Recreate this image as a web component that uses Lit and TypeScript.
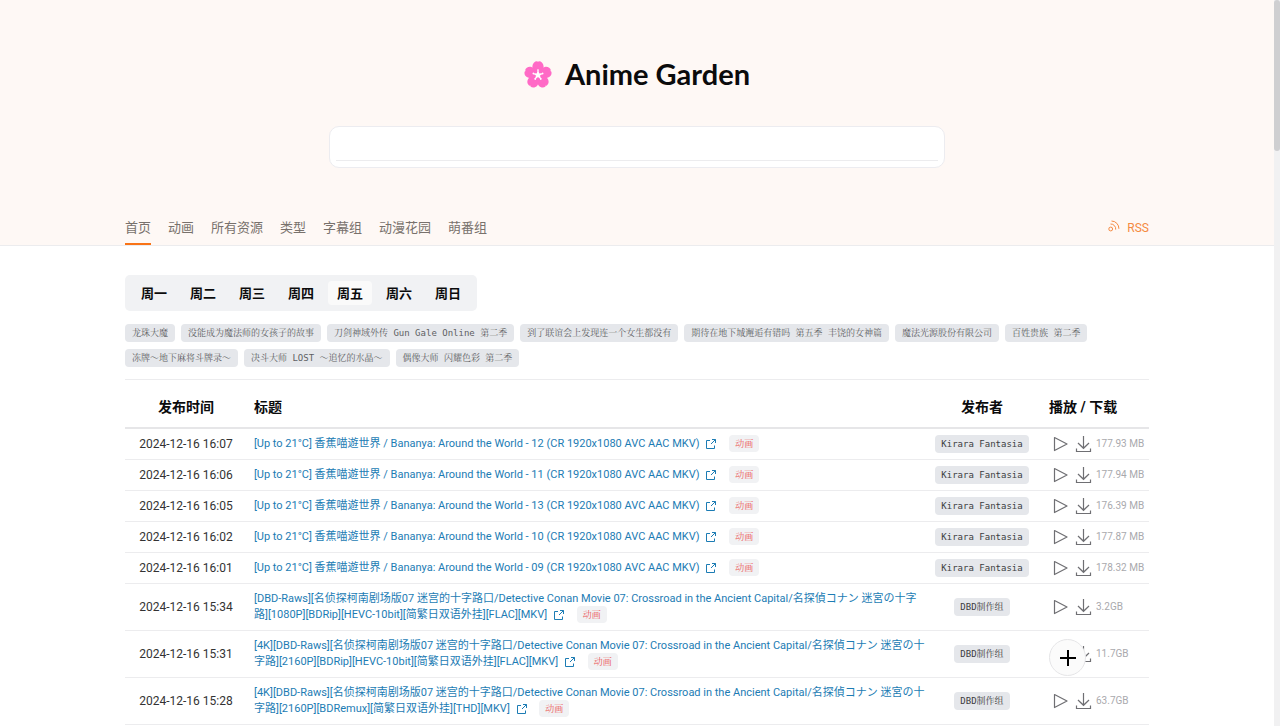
import { LitElement, html, css, svg } from "lit";
import { customElement, state } from "lit/decorators.js";
import { classMap } from "lit/directives/class-map.js";

interface Resource {
  time: string;
  title: string;
  team: string;
  size: string;
}

const NAV = ["首页", "动画", "所有资源", "类型", "字幕组", "动漫花园", "萌番组"];
const DAYS = ["周一", "周二", "周三", "周四", "周五", "周六", "周日"];
const SHOWS = [
  "龙珠大魔",
  "没能成为魔法师的女孩子的故事",
  "刀剑神域外传 Gun Gale Online 第二季",
  "到了联谊会上发现连一个女生都没有",
  "期待在地下城邂逅有错吗 第五季 丰饶的女神篇",
  "魔法光源股份有限公司",
  "百姓贵族 第二季",
  "冻牌～地下麻将斗牌录～",
  "决斗大师 LOST ～追忆的水晶～",
  "偶像大师 闪耀色彩 第二季",
];

const bananya = (ep: string) =>
  `[Up to 21°C] 香蕉喵遊世界 / Bananya: Around the World - ${ep} (CR 1920x1080 AVC AAC MKV)`;
const CONAN =
  "[DBD-Raws][名侦探柯南剧场版07 迷宫的十字路口/Detective Conan Movie 07: Crossroad in the Ancient Capital/名探偵コナン 迷宮の十字路]";

const RESOURCES: Resource[] = [
  { time: "2024-12-16 16:07", title: bananya("12"), team: "Kirara Fantasia", size: "177.93 MB" },
  { time: "2024-12-16 16:06", title: bananya("11"), team: "Kirara Fantasia", size: "177.94 MB" },
  { time: "2024-12-16 16:05", title: bananya("13"), team: "Kirara Fantasia", size: "176.39 MB" },
  { time: "2024-12-16 16:02", title: bananya("10"), team: "Kirara Fantasia", size: "177.87 MB" },
  { time: "2024-12-16 16:01", title: bananya("09"), team: "Kirara Fantasia", size: "178.32 MB" },
  { time: "2024-12-16 15:34", title: `${CONAN}[1080P][BDRip][HEVC-10bit][简繁日双语外挂][FLAC][MKV]`, team: "DBD制作组", size: "3.2GB" },
  { time: "2024-12-16 15:31", title: `[4K]${CONAN}[2160P][BDRip][HEVC-10bit][简繁日双语外挂][FLAC][MKV]`, team: "DBD制作组", size: "11.7GB" },
  { time: "2024-12-16 15:28", title: `[4K]${CONAN}[2160P][BDRemux][简繁日双语外挂][THD][MKV]`, team: "DBD制作组", size: "63.7GB" },
];

const petal = (deg: number) => svg`<path transform="rotate(${deg} 14 15)"
  d="M14 15.5C10.5 13.5 8.2 9.6 8.4 6.2C8.6 3.2 10.8 1.1 13.3 1.3L14 2L14.7 1.3C17.2 1.1 19.4 3.2 19.6 6.2C19.8 9.6 17.5 13.5 14 15.5Z"/>`;
const stamen = (deg: number) => svg`<path transform="rotate(${deg} 14 15)"
  d="M14 9.3A.8.8 0 0 1 14.5 10.8L15.5 15H12.5L13.5 10.8A.8.8 0 0 1 14 9.3Z"/>`;

@customElement("app-root")
export class AppRoot extends LitElement {
  @state() private day = "周五";

  static styles = css`
    :host {
      display: flex;
      height: 100vh;
      overflow: hidden;
      background: #fff;
      color: #0b0b0c;
      font-family: Roboto, "Noto Sans CJK SC", sans-serif;
    }
    * { box-sizing: border-box; }
    a { color: inherit; text-decoration: none; }
    button { font: inherit; color: inherit; border: 0; background: none; padding: 0; cursor: pointer; }
    svg { display: block; }
    .page { flex: 1; min-width: 0; overflow: hidden; }
    .track { width: 6px; background: #f1f1f2; }
    .thumb { width: 6px; height: 151px; border-radius: 3px; background: #cfcfd1; }
    .wrap { width: 100%; max-width: 1024px; margin: 0 auto; }
    .hero { background: #fef8f5; border-bottom: 1px solid #ececee; padding-top: 54px; }
    .brand {
      display: flex; align-items: center; justify-content: center; gap: 13px;
      height: 40px; margin: 0;
      font: 700 29px/40px Lato, sans-serif;
    }
    .search {
      width: 100%; max-width: 616px; height: 42px; margin: 32px auto 50px;
      padding: 0 6px 6px; background: #fff;
      border: 1px solid #ececf0; border-radius: 10px;
    }
    .search input {
      display: block; width: 100%; height: 100%; padding: 0 8px;
      border: 0; border-bottom: 1px solid #ececee; outline: 0;
      background: none; font: inherit; font-size: 14px;
    }
    .nav { display: flex; gap: 17px; font-size: 13px; line-height: 20px; color: #78716c; }
    .tab { padding-bottom: 5px; border-bottom: 2px solid transparent; }
    .tab.current { border-color: #f97316; }
    .rss { display: flex; gap: 7px; margin-left: auto; font-size: 12px; color: #f58a42; }
    .rss svg { margin-top: 2px; }
    .days {
      display: inline-flex; gap: 5px; margin-top: 29px; padding: 6px 7px;
      background: #f1f2f4; border-radius: 5px; vertical-align: top;
    }
    .day { width: 44px; height: 24px; padding-bottom: 2px; border-radius: 4px; font-size: 13px; font-weight: 700; }
    .day.current { background: #fafafa; }
    .shows {
      display: flex; flex-wrap: wrap; gap: 7px 6px;
      margin: 13px 0 12px; padding: 0; list-style: none;
    }
    .show, .team, .kind {
      font: 9px/18px "DejaVu Sans Mono", "Noto Serif CJK SC", serif;
      background: #e5e7eb; border-radius: 4px;
    }
    .show { display: block; height: 18px; padding: 0 7px; color: #5e5f63; }
    .list {
      width: 100%; table-layout: fixed; border-spacing: 0;
      border-top: 1px solid #ececee;
    }
    .c-time { width: 122px; }
    .c-team { width: 112px; }
    .c-act { width: 111px; }
    th {
      height: 49px; padding: 4px 0 0 7px; border-bottom: 2px solid #e6e6e8;
      text-align: left; font-size: 14px; font-weight: 700;
    }
    td { padding: 7px 0; border-bottom: 1px solid #ececee; font-size: 11px; line-height: 16px; }
    th.mid, td.mid { padding-left: 0; padding-right: 0; text-align: center; }
    .time { font-size: 12px; color: #333; }
    td.title { padding: 7px 0 7px 7px; color: #1c7cb4; }
    .ext { display: inline-block; margin: 0 9px 0 3px; vertical-align: -3px; }
    .kind { padding: 4px 6px 3px; line-height: 10px; color: #eb5757; background: #f1f2f4; }
    .team { display: inline-block; padding: 0 6px; color: #3c3d41; vertical-align: top; }
    td.team-cell { padding: 6px 0; }
    th.act { padding-left: 11px; }
    td.act { padding: 5px 0 5px 12px; }
    .ops { display: flex; align-items: center; gap: 3px; height: 20px; color: #6f6f73; }
    .size { font-size: 10px; color: #a9a9ad; white-space: nowrap; }
    .add {
      position: fixed; right: calc(50% - 446px); bottom: 50px;
      display: grid; place-items: center; width: 37px; height: 37px;
      border: 1px solid #e5e5e7; border-radius: 50%; background: #fbfbfb; color: #000;
    }
  `;

  private row(r: Resource) {
    return html`<tr>
      <td class="mid time">${r.time}</td>
      <td class="title">
        <a href="#">${r.title}</a>
        <a href="#" aria-label="打开原链接"><svg class="ext" width="12" height="12" viewBox="0 0 12 12" fill="none" stroke="currentColor"><path d="M5 2.5H1.5V10.5H9.5V7.5M7 1.5H10.5V5M10.5 1.5L6 6"/></svg></a>
        <a class="kind" href="#">动画</a>
      </td>
      <td class="mid team-cell"><a class="team" href="#">${r.team}</a></td>
      <td class="act"><div class="ops">
        <a href="#" aria-label="播放"><svg width="20" height="20" viewBox="0 0 20 20" fill="none" stroke="currentColor" stroke-width="1.2" stroke-linejoin="round"><path d="M4.5 3.5L17 10L4.5 16.5Z"/></svg></a>
        <a href="#" aria-label="下载"><svg width="20" height="20" viewBox="0 0 20 20" fill="none" stroke="currentColor" stroke-width="1.2"><path d="M10.5 2V14M5 9L10.5 14.3L16 9M3.5 14.5V17.5H17.5V14.5"/></svg></a>
        <span class="size">${r.size}</span>
      </div></td>
    </tr>`;
  }

  render() {
    return html`
      <div class="page">
        <header class="hero">
          <h1 class="brand">
            <svg width="28" height="29" viewBox="0 0 28 29" aria-hidden="true">
              <g fill="#ff6ac6">${[0, 72, 144, 216, 288].map(petal)}</g>
              <g fill="#fff">${[0, 72, 144, 216, 288].map(stamen)}</g>
            </svg>
            <span>Anime Garden</span>
          </h1>
          <form class="search" @submit=${(e: Event) => e.preventDefault()}>
            <input type="text" aria-label="搜索" />
          </form>
          <nav class="wrap nav">
            ${NAV.map((n, i) => html`<a href="#" class=${classMap({ tab: true, current: i === 0 })}>${n}</a>`)}
            <a class="rss" href="#">
              <svg width="12" height="12" viewBox="0 0 12 12" fill="none" stroke="currentColor"><circle cx="2.7" cy="9" r="1.9"/><path d="M2.5 4A5 5 0 0 1 7.7 9.6M3.5 1A7.5 7.5 0 0 1 10.9 8.8"/></svg>
              <span>RSS</span>
            </a>
          </nav>
        </header>
        <main class="wrap">
          <div class="days">
            ${DAYS.map((d) => html`<button class=${classMap({ day: true, current: d === this.day })} @click=${() => (this.day = d)}>${d}</button>`)}
          </div>
          <ul class="shows">
            ${SHOWS.map((s) => html`<li><a class="show" href="#">${s}</a></li>`)}
          </ul>
          <table class="list">
            <colgroup><col class="c-time" /><col /><col class="c-team" /><col class="c-act" /></colgroup>
            <thead>
              <tr><th class="mid">发布时间</th><th>标题</th><th class="mid">发布者</th><th class="act">播放 / 下载</th></tr>
            </thead>
            <tbody>${RESOURCES.map((r) => this.row(r))}</tbody>
          </table>
        </main>
      </div>
      <div class="track"><div class="thumb"></div></div>
      <button class="add" aria-label="添加">
        <svg width="18" height="18" viewBox="0 0 18 18" stroke="currentColor" stroke-width="2"><path d="M9 1V17M1 9H17"/></svg>
      </button>
    `;
  }
}
